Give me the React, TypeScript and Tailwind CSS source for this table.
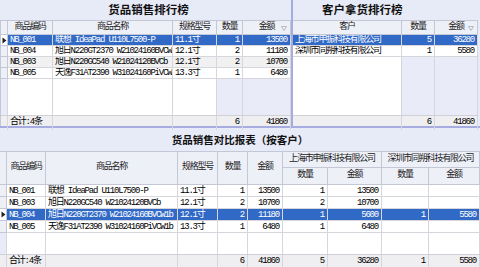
import React from "react";

const cellFont = "font-['Liberation_Mono','Noto_Sans_CJK_SC',monospace] text-[9px] tracking-[-1.2px]";
const titleFont = "font-['Noto_Sans_CJK_SC',sans-serif] font-bold text-[#111]";

const topLeftCols = "grid grid-cols-[7px_45px_120px_44px_26px_48px]";
const topRightCols = "grid grid-cols-[109px_33px_43px]";
const bottomCols = "grid grid-cols-[7px_39px_132px_40px_30px_35px_45px_54px_47px_51px]";

type Row = { cells: string[]; selected?: boolean; gray?: boolean };

const topLeftRows: Row[] = [
  { cells: ["NB_001", "联想 IdeaPad U110L7500-P", "11.1寸", "1", "13500"], selected: true },
  { cells: ["NB_004", "旭日N220GT2370 W21024160BVCW1b", "12.1寸", "2", "11180"] },
  { cells: ["NB_003", "旭日N220GC540 W21024120BVCb", "12.1寸", "2", "10700"], gray: true },
  { cells: ["NB_005", "天逸F31AT2390 W31024160PiVCW1b", "13.3寸", "1", "6480"] },
];

const topRightRows: Row[] = [
  { cells: ["上海市申振科技有限公司", "5", "36280"], selected: true },
  { cells: ["深圳市同朔科技有限公司", "1", "5580"] },
];

const bottomRows: Row[] = [
  { cells: ["NB_001", "联想 IdeaPad U110L7500-P", "11.1寸", "1", "13500", "1", "13500", "", ""] },
  { cells: ["NB_003", "旭日N220GC540 W21024120BVCb", "12.1寸", "2", "10700", "2", "10700", "", ""] },
  { cells: ["NB_004", "旭日N220GT2370 W21024160BVCW1b", "12.1寸", "2", "11180", "1", "5600", "1", "5580"], selected: true },
  { cells: ["NB_005", "天逸F31AT2390 W31024160PiVCW1b", "13.3寸", "1", "6480", "1", "6480", "", ""] },
];

function Head({ children, className = "" }: { children?: React.ReactNode; className?: string }) {
  return (
    <div
      className={`flex items-center justify-center border-r border-b border-[#c4c7d6] bg-[#eef0f8] text-[#222] whitespace-nowrap overflow-hidden ${className}`}
    >
      {children}
    </div>
  );
}

function SortMark() {
  return (
    <svg width="6" height="5" viewBox="0 0 6 5" className="absolute right-[3px] top-[5px]">
      <polygon points="0.5,0.5 5.5,0.5 3,4.5" fill="none" stroke="#a8a8b4" strokeWidth="0.8" />
    </svg>
  );
}

function Pointer({ selected }: { selected?: boolean }) {
  return (
    <div
      className={`flex items-center justify-center border-r border-b border-[#c4c7d6] ${selected ? "bg-white" : "bg-[#eef0f8]"}`}
    >
      {selected && (
        <svg width="5" height="7" viewBox="0 0 5 7">
          <polygon points="0.5,0.5 4.5,3.5 0.5,6.5" fill="#222" />
        </svg>
      )}
    </div>
  );
}

function Cell({ children, right, row }: { children?: React.ReactNode; right?: boolean; row: Row }) {
  const bg = row.selected
    ? "bg-[#3169c6] text-white"
    : row.gray
      ? "bg-[#f1f1f1] text-black"
      : "bg-white text-black";
  return (
    <div
      className={`border-r border-b border-[#d6d6dc] overflow-hidden whitespace-nowrap leading-[10px] flex items-center ${right ? "justify-end pr-[3px]" : "pl-[2px]"} ${bg}`}
    >
      {children}
    </div>
  );
}

function Filler({ cols, tints }: { cols: string; tints: boolean[] }) {
  return (
    <div className={`${cols} flex-1`}>
      {tints.map((t, i) => (
        <div key={i} className={`border-r border-[#d6d6dc] ${t ? "bg-[#e9ecf8]" : "bg-white"}`} />
      ))}
    </div>
  );
}

function Foot({ cols, items }: { cols: string; items: { text?: string; right?: boolean }[] }) {
  return (
    <div className={`${cols} border-t border-[#d0d0d6] bg-[#efeff1]`}>
      {items.map((it, i) => (
        <div
          key={i}
          className={`border-r border-[#d6d6dc] flex items-center whitespace-nowrap ${it.right ? "justify-end pr-[3px]" : "pl-[2px]"}`}
        >
          {it.text}
        </div>
      ))}
    </div>
  );
}

export default function App() {
  return (
    <div className={`w-[480px] h-[267px] overflow-hidden bg-[#e7eaf7] ${cellFont}`}>
      {/* 上半部分 */}
      <div className="flex h-[126px]">
        <div className="w-[291px] flex flex-col">
          <div className={`h-[20px] flex items-center justify-center pl-[6px] text-[11.5px] tracking-normal ${titleFont}`}>
            货品销售排行榜
          </div>
          <div className={`${topLeftCols} h-[15px] border-t border-l border-[#c4c7d6]`}>
            <Head />
            <Head>商品编码</Head>
            <Head>商品名称</Head>
            <Head>规格型号</Head>
            <Head>数量</Head>
            <Head className="relative">
              金额
              <SortMark />
            </Head>
          </div>
          <div className="border-l border-[#c4c7d6] flex-1 flex flex-col">
            {topLeftRows.map((r, i) => (
              <div key={i} className={`${topLeftCols} h-[11px]`}>
                <Pointer selected={r.selected} />
                <Cell row={r}>{r.cells[0]}</Cell>
                <Cell row={r}>{r.cells[1]}</Cell>
                <Cell row={r}>{r.cells[2]}</Cell>
                <Cell row={r} right>{r.cells[3]}</Cell>
                <Cell row={r} right>{r.cells[4]}</Cell>
              </div>
            ))}
            <Filler cols={topLeftCols} tints={[true, false, false, false, true, true]} />
            <Foot
              cols={`${topLeftCols} h-[11px]`}
              items={[{}, { text: "合计:4条" }, {}, {}, { text: "6", right: true }, { text: "41860", right: true }]}
            />
          </div>
        </div>

        <div className="w-[2px] bg-[#a7ace0]" />

        <div className="flex-1 flex flex-col">
          <div className={`h-[20px] flex items-center pl-[29px] text-[11.5px] tracking-normal ${titleFont}`}>
            客户拿货排行榜
          </div>
          <div className="w-[185px] flex-1 flex flex-col">
            <div className={`${topRightCols} h-[15px] border-t border-[#c4c7d6]`}>
              <Head>客户</Head>
              <Head>数量</Head>
              <Head className="relative">
                金额
                <SortMark />
              </Head>
            </div>
            {topRightRows.map((r, i) => (
              <div key={i} className={`${topRightCols} h-[11px]`}>
                <Cell row={r}>{r.cells[0]}</Cell>
                <Cell row={r} right>{r.cells[1]}</Cell>
                <Cell row={r} right>{r.cells[2]}</Cell>
              </div>
            ))}
            <Filler cols={topRightCols} tints={[false, true, true]} />
            <Foot
              cols={`${topRightCols} h-[11px]`}
              items={[{}, { text: "6", right: true }, { text: "41860", right: true }]}
            />
          </div>
        </div>
      </div>

      <div className="h-[2px] bg-[#a7ace0]" />

      {/* 下半部分 */}
      <div className="h-[139px] flex flex-col">
        <div className={`h-[23px] flex items-center justify-center text-[10.5px] tracking-normal ${titleFont}`}>
          货品销售对比报表（按客户）
        </div>
        <div className={`${bottomCols} grid-rows-[16px_17px] border-t border-[#c4c7d6]`}>
          <Head className="row-span-2" />
          <Head className="row-span-2">商品编码</Head>
          <Head className="row-span-2">商品名称</Head>
          <Head className="row-span-2">规格型号</Head>
          <Head className="row-span-2">数量</Head>
          <Head className="row-span-2">金额</Head>
          <Head className="col-span-2">上海市申振科技有限公司</Head>
          <Head className="col-span-2">深圳市同朔科技有限公司</Head>
          <Head>数量</Head>
          <Head>金额</Head>
          <Head>数量</Head>
          <Head>金额</Head>
        </div>
        {bottomRows.map((r, i) => (
          <div key={i} className={`${bottomCols} h-[12px]`}>
            <Pointer selected={r.selected} />
            <Cell row={r}>{r.cells[0]}</Cell>
            <Cell row={r}>{r.cells[1]}</Cell>
            <Cell row={r}>{r.cells[2]}</Cell>
            {r.cells.slice(3).map((c, j) => (
              <Cell key={j} row={r} right>
                {c}
              </Cell>
            ))}
          </div>
        ))}
        <Filler cols={bottomCols} tints={[true, false, false, false, false, false, false, false, false, false]} />
        <Foot
          cols={`${bottomCols} h-[13px]`}
          items={[
            {},
            { text: "合计:4条" },
            {},
            {},
            { text: "6", right: true },
            { text: "41860", right: true },
            { text: "5", right: true },
            { text: "36280", right: true },
            { text: "1", right: true },
            { text: "5580", right: true },
          ]}
        />
      </div>
    </div>
  );
}
